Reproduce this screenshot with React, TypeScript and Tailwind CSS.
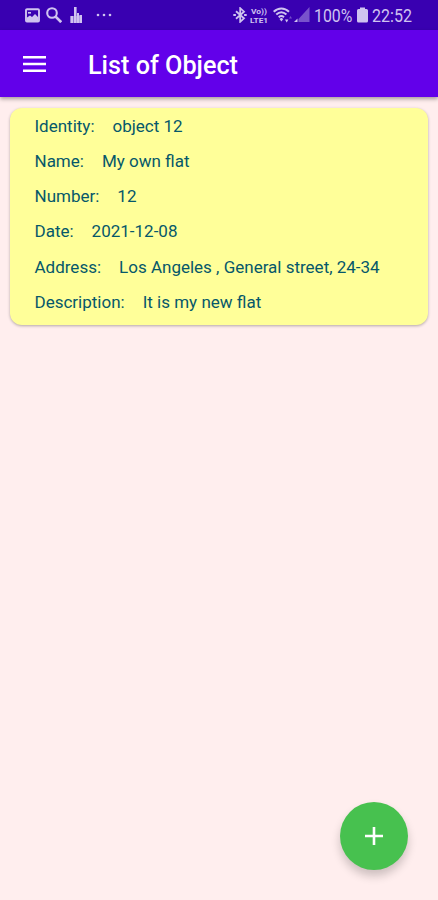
const fields = [
  { label: "Identity:", value: "object 12" },
  { label: "Name:", value: "My own flat" },
  { label: "Number:", value: "12" },
  { label: "Date:", value: "2021-12-08" },
  { label: "Address:", value: "Los Angeles , General street, 24-34" },
  { label: "Description:", value: "It is my new flat" },
];

function StatusBar() {
  return (
    <div className="flex h-[30px] shrink-0 items-center bg-[#3900b1] pl-[25px] pr-[26px] text-[#cfc3f0]">
      {/* Notifications */}
      <svg className="h-[15px] w-[15px]" viewBox="0 0 15 15" fill="none" stroke="currentColor">
        <rect x="1" y="1.2" width="13" height="12.3" rx="1" strokeWidth="1.9" />
        <path d="M2 13V9.5l3-2 2 1.6 3-3.1 3 3V13z" fill="currentColor" stroke="none" />
        <path d="M3 4h3v1.6H3z" fill="currentColor" stroke="none" />
      </svg>
      <svg className="ml-[6px] h-4 w-4" viewBox="0 0 16 16" fill="none" stroke="currentColor">
        <circle cx="6" cy="6" r="4.8" strokeWidth="2.1" />
        <path d="M9.6 9.6l5.6 5.6" strokeWidth="2.7" />
      </svg>
      <svg className="ml-2 h-4 w-3" viewBox="0 0 12 16" fill="currentColor">
        <path d="M.5 9h2.6v7H.5zM4 0h2.6v16H4zM7 6h2v10H7zM9.4 8H12v8H9.4z" />
        <path d="M.5 9H12v7H.5z" opacity=".55" />
      </svg>
      <svg className="ml-[14px] h-1 w-4" viewBox="0 0 16 4" fill="currentColor">
        <circle cx="2" cy="2" r="1.3" />
        <circle cx="8" cy="2" r="1.3" />
        <circle cx="14" cy="2" r="1.3" />
      </svg>

      {/* System icons */}
      <div className="ml-auto flex items-center">
        <svg className="h-4 w-[14px]" viewBox="0 0 14 16" fill="none" stroke="currentColor" strokeWidth="1.8">
          <path d="M3 4.3l8 7-3.8 3.5V1.2L11 4.7l-8 7" />
          <path d="M.3 8h2.6M11.1 8h2.6" strokeWidth="2.2" />
        </svg>
        <svg className="ml-[2px] h-[22px] w-5 font-['Roboto']" viewBox="0 0 20 22" fill="currentColor">
          <text x="2" y="9.5" fontSize="8" fontWeight="700" textLength="16" lengthAdjust="spacingAndGlyphs">Vo))</text>
          <text x="1" y="19" fontSize="8" fontWeight="700" textLength="18" lengthAdjust="spacingAndGlyphs">LTE1</text>
        </svg>
        <svg className="ml-[4px] h-4 w-5" viewBox="0 0 20 16" fill="none" stroke="currentColor" strokeWidth="2">
          <path d="M.7 4.7c4.5-4.4 10.8-4.4 15.3 0M3.3 7.6c3.2-3 6.900-3 10.100 0M5.700 10.200c1.700-1.500 3.600-1.500 5.300 0" />
          <path d="M6.5 12l1.9-1.2 1.9 1.2-1.9 2.5z" fill="currentColor" stroke="none" />
          <path d="M12 12.5h3.4L13.7 15.5z" fill="currentColor" stroke="none" />
          <path d="M16 11.5l1.5-2.5 1.5 2.5z" fill="currentColor" stroke="none" opacity=".4" />
        </svg>
        <svg className="ml-[1px] h-4 w-4" viewBox="0 0 16 16" fill="currentColor">
          <path d="M15.5 0v15H4.5V12z" opacity=".42" />
          <path d="M3.5 11.5V15H0z" />
        </svg>
        <div className="ml-1 w-[39px] font-['Roboto'] text-[18px] leading-[30px]">
          <span className="inline-block origin-left scale-x-[0.88] pt-px">100%</span>
        </div>
        <svg className="ml-[4px] h-4 w-[11px]" viewBox="0 0 11 16" fill="currentColor">
          <path d="M3 .5h5V2h1.5Q11 2 11 3.5v10.5q0 1.5-1.5 1.5h-8Q0 15.5 0 14V3.5Q0 2 1.5 2H3z" />
        </svg>
        <div className="ml-1 w-[40px] font-['Roboto'] text-[18px] leading-[30px]">
          <span className="inline-block origin-left scale-x-[0.89] pt-px">22:52</span>
        </div>
      </div>
    </div>
  );
}

export default function App() {
  return (
    <div className="flex h-[900px] w-full flex-col overflow-hidden bg-[#ffeeee] font-['Roboto',sans-serif]">
      <StatusBar />

      <header className="flex h-[67px] shrink-0 items-center bg-[#6200ea] pl-[23px] text-white shadow-[0_2px_4px_rgba(0,0,0,0.35)]">
        <svg className="h-4 w-[23px]" viewBox="0 0 23 16" fill="currentColor">
          <path d="M0 0h23v2.6H0zM0 6.7h23v2.6H0zM0 13.4h23V16H0z" />
        </svg>
        <h1 className="ml-[42px] pt-1 text-[25.2px] leading-8 font-medium">List of Object</h1>
      </header>

      <main className="flex grow flex-col px-[10px] pt-[11px]">
        <div className="flex h-[217px] flex-col rounded-[12px] bg-[#ffff99] pt-px pl-[24.5px] text-[17px] text-[#06586a] shadow-[0_1px_3px_rgba(0,0,0,0.3)]">
          {fields.map((field) => (
            <div key={field.label} className="flex h-[35.2px] items-center gap-[18px]">
              <span>{field.label}</span>
              <span>{field.value}</span>
            </div>
          ))}
        </div>

        <button className="mt-auto mr-[20px] mb-[30px] flex h-[68px] w-[68px] items-center justify-center self-end rounded-full bg-[#47c14f] text-white shadow-[0_6px_10px_rgba(0,0,0,0.2)]">
          <svg className="h-[18px] w-[18px]" viewBox="0 0 18 18" fill="currentColor">
            <path d="M7.7 0h2.6v7.7H18v2.6h-7.7V18H7.7v-7.7H0V7.7h7.7z" />
          </svg>
        </button>
      </main>
    </div>
  );
}
